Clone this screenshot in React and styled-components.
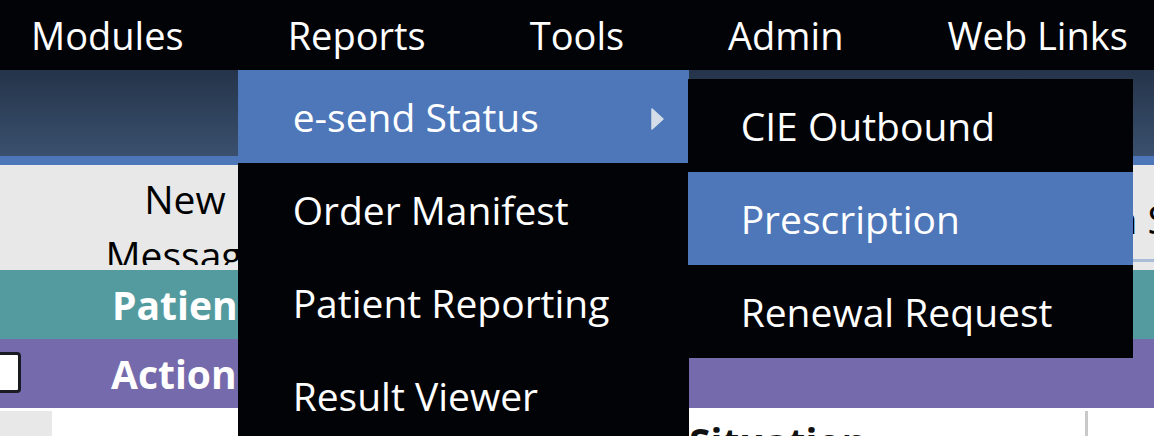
import React from 'react';
import styled, { createGlobalStyle } from 'styled-components';

const GlobalStyle = createGlobalStyle`
  html, body {
    margin: 0;
    padding: 0;
    background: #ffffff;
    overflow: hidden;
  }
  body {
    font-family: "Open Sans", "Noto Sans", sans-serif;
  }
`;

const Page = styled.div`
  width: 1154px;
  height: 436px;
  overflow: hidden;
  position: relative;
`;

const NavBar = styled.nav`
  display: flex;
  align-items: stretch;
  height: 70px;
  background: #020307;
  padding-left: 31px;
  gap: 104px;
  position: relative;
  z-index: 10;
`;

const NavItem = styled.div`
  position: relative;
  color: #ffffff;
  font-size: 38px;
  line-height: 70px;
  white-space: nowrap;
`;

const Dropdown = styled.ul`
  position: absolute;
  top: 70px;
  left: -50px;
  width: 451px;
  margin: 0;
  padding: 0;
  list-style: none;
  background: #020307;
`;

const SubMenu = styled(Dropdown)`
  top: 9px;
  left: 450px;
  width: 445px;
`;

const MenuItem = styled.li`
  position: relative;
  display: flex;
  align-items: center;
  justify-content: space-between;
  height: 93px;
  padding: 0 25px 0 ${(p) => p.$indent || 55}px;
  background: ${(p) => (p.$active ? '#4d77b9' : 'transparent')};
  color: #ffffff;
  font-size: 39px;
  line-height: 93px;
  white-space: nowrap;
`;

const Arrow = styled.svg`
  width: 13px;
  height: 22px;
  margin-top: 5px;
  flex-shrink: 0;
`;

const Banner = styled.div`
  height: 86px;
  background: linear-gradient(180deg, #25344a 0%, #3a506e 100%);
`;

const BlueRule = styled.div`
  height: 9px;
  background: #4d77b9;
`;

const HeaderRow = styled.div`
  display: grid;
  grid-template-columns: 52px 262px 709px 1fr;
  height: 105px;
  background: #e8e8e8;
  color: #000000;
  font-size: 39px;
`;

const HeaderCell = styled.div`
  height: ${(p) => p.$height || 100}px;
  overflow: hidden;
  padding: ${(p) => p.$top || 0}px ${(p) => p.$side || 0}px 0 ${(p) => p.$left ?? p.$side ?? 0}px;
  box-sizing: border-box;
  line-height: 56px;
  text-align: ${(p) => p.$align || 'left'};
  white-space: ${(p) => (p.$wrap ? 'normal' : 'nowrap')};
  border-bottom: ${(p) => (p.$rule ? '3px solid #aabdd6' : 'none')};
`;

const GroupRow = styled.div`
  display: flex;
  align-items: center;
  height: 69px;
  background: ${(p) => p.$bg};
  color: #ffffff;
  font-size: 39px;
  font-weight: 700;
  white-space: nowrap;
`;

const GroupLabel = styled.span`
  padding-left: ${(p) => p.$pad}px;
`;

const CheckBox = styled.span`
  display: block;
  width: 41px;
  height: 41px;
  margin-left: -20px;
  margin-top: -2px;
  box-sizing: border-box;
  border: 3px solid #1a1a22;
  border-radius: 4px;
  background: #ffffff;
`;

const BodyRow = styled.div`
  display: grid;
  grid-template-columns: 52px 637px 396px 3px 1fr;
  padding-top: 3px;
  height: 40px;
`;

const GreyCell = styled.div`
  background: #e8e8e8;
`;

const BodyText = styled.div`
  padding-top: 3px;
  font-size: 39px;
  font-weight: 700;
  line-height: 56px;
  color: #111111;
  white-space: nowrap;
`;

const VLine = styled.div`
  background: #c9c9c9;
`;

const navItems = ['Modules', 'Reports', 'Tools', 'Admin', 'Web Links'];

const App = () => (
  <>
    <GlobalStyle />
    <Page>
      <NavBar>
        {navItems.map((label) => (
          <NavItem key={label}>
            {label}
            {label === 'Reports' && (
              <Dropdown>
                <MenuItem $active>
                  e-send Status
                  <Arrow viewBox="0 0 13 22">
                    <polygon points="1,1 12,11 1,21" fill="#d5dde8" stroke="#d5dde8" strokeWidth="1.5" strokeLinejoin="round" />
                  </Arrow>
                  <SubMenu>
                    <MenuItem $indent={53}>CIE Outbound</MenuItem>
                    <MenuItem $indent={53} $active>Prescription</MenuItem>
                    <MenuItem $indent={53}>Renewal Request</MenuItem>
                  </SubMenu>
                </MenuItem>
                <MenuItem>Order Manifest</MenuItem>
                <MenuItem>Patient Reporting</MenuItem>
                <MenuItem>Result Viewer</MenuItem>
              </Dropdown>
            )}
          </NavItem>
        ))}
      </NavBar>
      <Banner />
      <BlueRule />
      <HeaderRow>
        <HeaderCell />
        <HeaderCell $align="center" $top={6} $left={46} $side={42} $wrap>
          New Message
        </HeaderCell>
        <HeaderCell />
        <HeaderCell $top={26} $height={97} $rule>
          Action Status
        </HeaderCell>
      </HeaderRow>
      <GroupRow $bg="#549b9f">
        <GroupLabel $pad={112}>Patient</GroupLabel>
      </GroupRow>
      <GroupRow $bg="#756aab">
        <CheckBox />
        <GroupLabel $pad={90}>Action</GroupLabel>
      </GroupRow>
      <BodyRow>
        <GreyCell />
        <div />
        <BodyText>Situation</BodyText>
        <VLine />
        <div />
      </BodyRow>
    </Page>
  </>
);

export default App;
